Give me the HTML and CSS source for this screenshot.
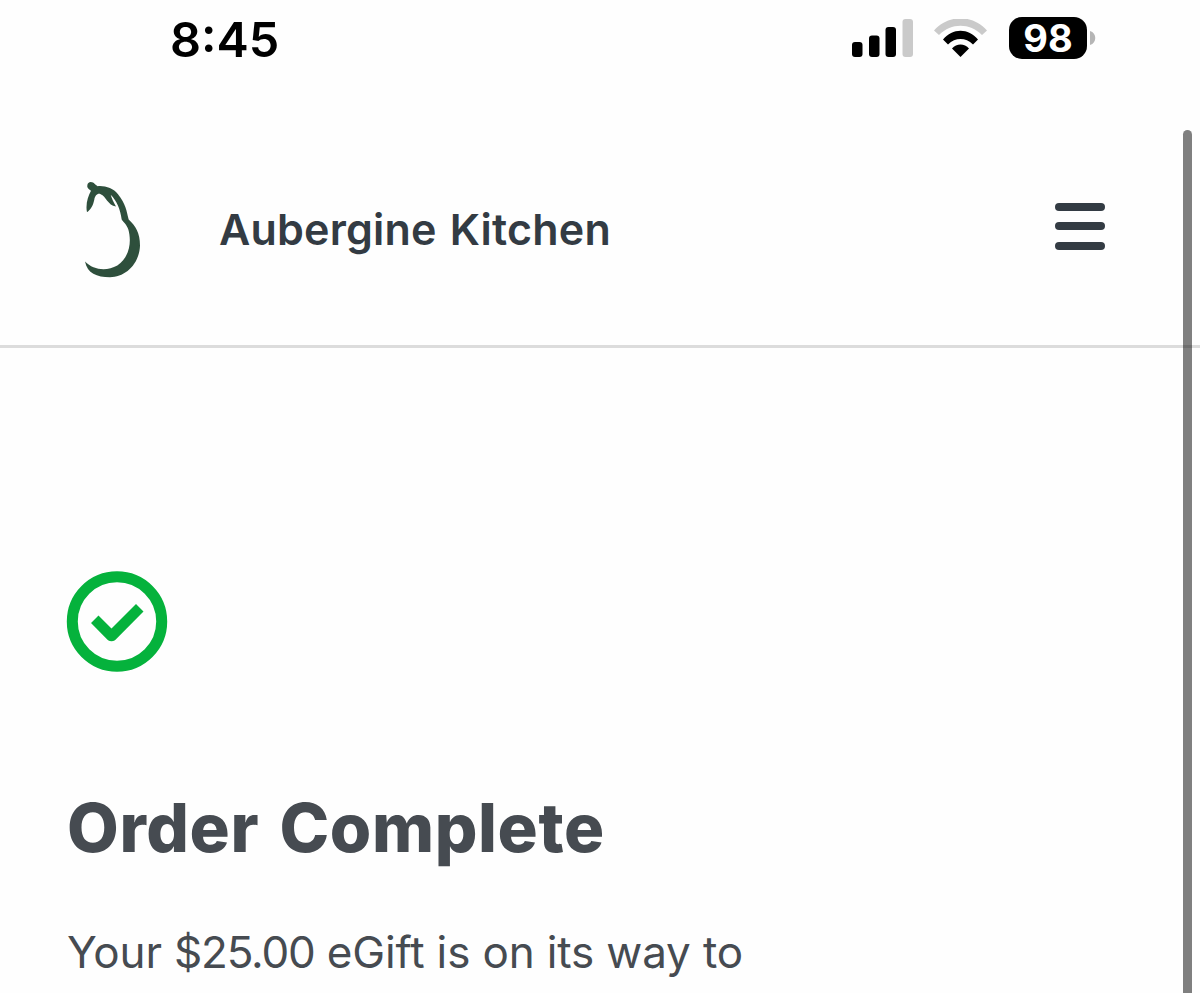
FILE: index.html
```html
<!DOCTYPE html>
<html lang="en">
<head>
    <meta charset="UTF-8">
    <meta name="viewport" content="width=device-width, initial-scale=1.0">
    <title>Order Complete</title>
    <link rel="stylesheet" href="styles.css">
</head>
<body>
    <div class="status-bar">
        <span class="time">8:45</span>
        <div class="status-icons">
            <svg class="signal" width="62" height="40" viewBox="0 0 62 40">
                <rect x="0" y="23" width="10.5" height="15" rx="3"/>
                <rect x="17" y="16.5" width="10.5" height="21.5" rx="3"/>
                <rect x="33.5" y="8" width="10.5" height="30" rx="3"/>
                <rect class="faded" x="50.5" y="0" width="10.5" height="38" rx="3"/>
            </svg>
            <svg class="wifi" width="54" height="40" viewBox="0 0 54 40">
                <path class="faded" d="M0 11.500C14.500-4.800 38.500-4.800 53 11.500L48 16C35.500 3.800 17.500 3.800 5 16Z"/>
                <path d="M9 20.500C18.500 8.700 34.500 8.700 44 20.500L39 25.500C31.500 18.200 21.500 18.200 14 25.500Z"/>
                <path d="M18 29.500C22.500 24 30.500 24 35 29.500L26.500 38Z"/>
            </svg>
            <div class="battery"><span>98</span></div>
            <svg class="battery-cap" width="6" height="14" viewBox="0 0 6 14">
                <path d="M0 0C7 2 7 12 0 14Z"/>
            </svg>
        </div>
    </div>

    <header class="header">
        <svg class="logo" width="56" height="96" viewBox="75 37.5 168 288">
            <path d="M82 48C82 36 97 34 105 44L113 50C135 48 160 56 174 74C197 102 200 125 206 150C227 170 240 190 240 228C238 285 195 323 150 323C110 323 82 312 75 276C100 302 140 306 172 288C210 262 215 215 205 180C200 165 190 158 185 150C181 120 170 94 152 76C156 88 160 98 168 111C143 107 138 80 122 74C113 70 105 78 103 90C99 110 92 120 81 128C76 105 84 80 93 64C87 60 80 55 82 48Z"/>
        </svg>
        <div class="merchant">Aubergine Kitchen</div>
        <button class="menu-btn" aria-label="Menu">
            <span></span>
            <span></span>
            <span></span>
        </button>
    </header>

    <main class="content">
        <svg class="check" width="102" height="102" viewBox="0 0 102 102">
            <circle cx="51" cy="50.5" r="44.7"/>
            <path d="M25 52L32.500 44.500L45.500 57.500L70 33L77.500 40.500L49 69.200Q45.500 71.500 42 69.200Z"/>
        </svg>
        <h1>Order Complete</h1>
        <p class="message">Your <span class="amount">$25.00</span> eGift is on its way to</p>
    </main>

    <div class="scrollbar"></div>
</body>
</html>
```

FILE: styles.css
```css
body {
    margin: 0;
    height: 993px;
    overflow: hidden;
    position: relative;
    background-color: #fefefe;
    font-family: Inter, "Liberation Sans", sans-serif;
    color: #464b51;
}
.status-bar {
    display: flex;
    justify-content: space-between;
    box-sizing: border-box;
    height: 112px;
    padding: 10px 104px 0 170px;
    color: #000;
}
.time {
    font-size: 48.5px;
    font-weight: 600;
    line-height: 59px;
}
.status-icons {
    display: flex;
    align-items: flex-start;
}
.signal {
    margin-top: 9px;
}
.wifi {
    margin: 9px 21px 0 20px;
}
.faded {
    fill: #cacaca;
}
.battery {
    display: flex;
    align-items: center;
    justify-content: center;
    width: 78px;
    height: 42px;
    margin-top: 7px;
    border-radius: 13px;
    background-color: #000;
    color: #fff;
    font-size: 38px;
    font-weight: 700;
}
.battery-cap {
    margin: 21px 0 0 3px;
    fill: #b5b5b5;
}
.header {
    display: flex;
    align-items: center;
    box-sizing: border-box;
    height: 236px;
    padding: 0 95px 0 85px;
    border-bottom: 3px solid #dcdcdc;
}
.logo {
    margin: 2px 78px 0 0;
    fill: #2e4f3c;
}
.merchant {
    flex: 1;
    color: #333b43;
    font-size: 43px;
    font-weight: 600;
    letter-spacing: 0.2px;
    word-spacing: 2px;
    line-height: 60px;
}
.menu-btn {
    display: flex;
    flex-direction: column;
    gap: 11.5px;
    padding: 0;
    margin-top: -5px;
    border: none;
    background: none;
    cursor: pointer;
}
.menu-btn span {
    width: 50px;
    height: 8px;
    border-radius: 5px;
    background-color: #333b43;
}
.content {
    padding: 223px 66px 0;
}
.check {
    display: block;
    fill: #05b23c;
}
.check circle {
    fill: none;
    stroke: #05b23c;
    stroke-width: 11;
}
h1 {
    margin: 114px 0 0 1px;
    font-size: 67px;
    font-weight: 800;
    letter-spacing: 0.6px;
    word-spacing: 5px;
    line-height: 82px;
    white-space: nowrap;
}
.message {
    margin: 53px 0 0 1px;
    font-size: 44px;
    letter-spacing: -0.15px;
    line-height: 60px;
    white-space: nowrap;
}
.amount {
    letter-spacing: -1.2px;
}
.scrollbar {
    position: absolute;
    top: 130px;
    right: 8px;
    bottom: 0;
    width: 9px;
    border-radius: 5px 5px 0 0;
    background-color: rgba(0, 0, 0, 0.5);
}
```
